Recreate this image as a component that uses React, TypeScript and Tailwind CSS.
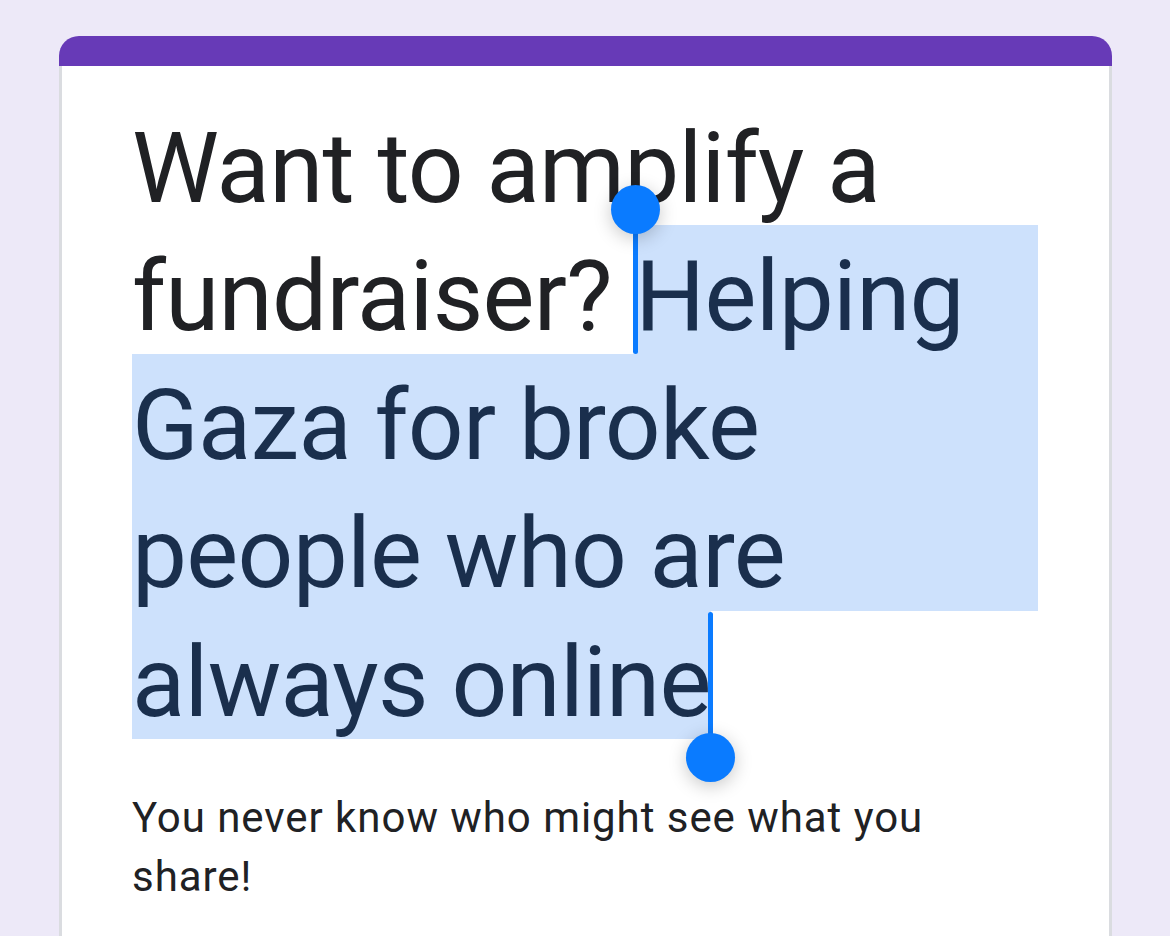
export default function App() {
  const font = { fontFamily: 'Roboto, "Noto Sans", sans-serif' };
  return (
    <div className="min-h-[936px] h-[936px] overflow-hidden bg-[#ede9f8] pl-[59px] pt-[36px]" style={font}>
      <div className="w-[1053px]">
        <div className="h-[30px] rounded-t-[20px] bg-[#673ab7]" />
        <div className="h-[900px] border-x-[3px] border-[#dadce0] bg-white pl-[70px] pr-[71px] pt-[30.5px]">
          <div className="text-[98px] leading-[115px] tracking-[-0.75px] text-[#202124]">
            <div className="flex h-[128.5px]">
              <span className="block whitespace-pre pt-[14px]">Want to amplify a</span>
            </div>
            <div className="flex h-[128.5px]">
              <span className="block whitespace-pre pt-[14px]">fundraiser? </span>
              <span className="relative block flex-1 bg-[#cde1fc] pt-[14px] text-[#1a2f4d]">
                Helping
                <span className="absolute left-[-2.5px] top-[-16px] bottom-0 w-[5px] rounded-b-full bg-[#0a7bff]" />
                <span className="absolute left-[-24.5px] top-[-40.5px] h-[49px] w-[49px] rounded-full bg-[#0a7bff] shadow-[0_4px_18px_rgba(0,0,0,0.22)]" />
              </span>
            </div>
            <div className="h-[128.5px] bg-[#cde1fc] pt-[14px] text-[#1a2f4d]">Gaza for broke</div>
            <div className="h-[128.5px] bg-[#cde1fc] pt-[14px] text-[#1a2f4d]">people who are</div>
            <div className="flex h-[128.5px]">
              <span className="relative block bg-[#cde1fc] pt-[14px] text-[#1a2f4d]">
                always online
                <span className="absolute right-[-2.5px] top-[1.5px] h-[146px] w-[5px] rounded-t-full bg-[#0a7bff]" />
                <span className="absolute right-[-24.5px] top-[122px] h-[49px] w-[49px] rounded-full bg-[#0a7bff] shadow-[0_4px_18px_rgba(0,0,0,0.22)]" />
              </span>
            </div>
          </div>
          <p className="mt-[49px] text-[42px] leading-[59px] tracking-[0.95px] text-[#202124]">
            You never know who might see what you share!
          </p>
        </div>
      </div>
    </div>
  );
}
